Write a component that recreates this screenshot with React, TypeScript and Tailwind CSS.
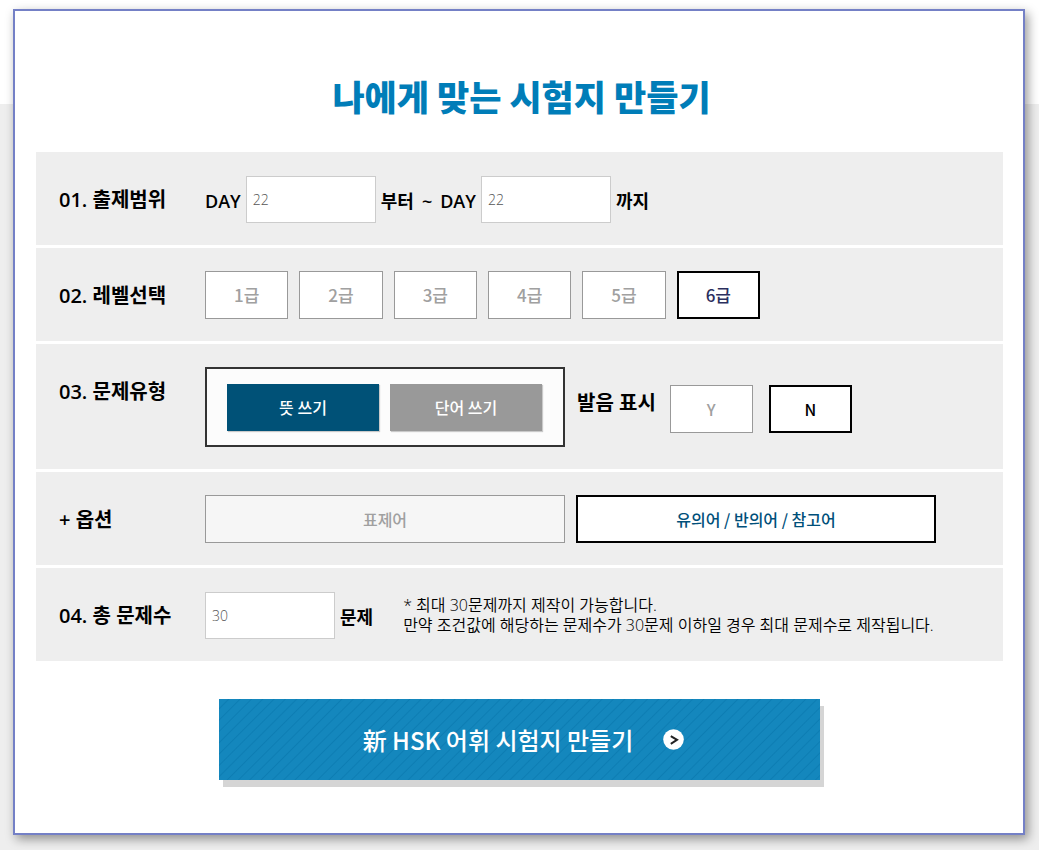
import { useState, type ReactNode } from "react";

const LEVELS = ["1급", "2급", "3급", "4급", "5급", "6급"];

function Row({ label, htmlFor, children }: { label: string; htmlFor?: string; children: ReactNode }) {
  const labelStyle = "flex h-[93px] w-[146px] shrink-0 items-center pt-[3px] text-[20px] leading-6 font-semibold";
  return (
    <div className="flex bg-[#eee] pl-[23px]">
      {htmlFor ? (
        <label htmlFor={htmlFor} className={labelStyle}>{label}</label>
      ) : (
        <h2 className={labelStyle}>{label}</h2>
      )}
      <div className="flex min-w-0 flex-1 items-center pt-[23px] pb-[22px]">{children}</div>
    </div>
  );
}

function NumberBox({ id, value, onChange }: { id: string; value: string; onChange: (v: string) => void }) {
  return (
    <input
      id={id}
      inputMode="numeric"
      value={value}
      onChange={(e) => onChange(e.target.value)}
      className="h-[47px] w-[130px] border border-[#ccc] bg-white px-[6px] text-[14px] font-light text-[#555] outline-none"
    />
  );
}

function Choice({
  active,
  onClick,
  className,
  activeText = "text-black",
  idleBg = "bg-white",
  children,
}: {
  active: boolean;
  onClick: () => void;
  className: string;
  activeText?: string;
  idleBg?: string;
  children: ReactNode;
}) {
  return (
    <button
      type="button"
      aria-pressed={active}
      onClick={onClick}
      className={`h-12 cursor-pointer leading-6 font-medium ${className} ${
        active ? `border-2 border-black bg-white ${activeText}` : `border border-[#999] text-[#a0a0a0] ${idleBg}`
      }`}
    >
      {children}
    </button>
  );
}

export default function App() {
  const [from, setFrom] = useState("22");
  const [to, setTo] = useState("22");
  const [count, setCount] = useState("30");
  const [level, setLevel] = useState("6급");
  const [kind, setKind] = useState("뜻 쓰기");
  const [sound, setSound] = useState("N");
  const [option, setOption] = useState("유의어 / 반의어 / 참고어");

  return (
    <main className="min-h-screen bg-[linear-gradient(#fff_104px,#eee_104px)] pt-[9px] pr-[14px] pb-[15px] pl-[13px] font-['Open_Sans','Noto_Sans_CJK_KR',sans-serif] text-black">
      <form
        onSubmit={(e) => e.preventDefault()}
        className="mx-auto max-w-[1012px] border-2 border-[#7480c6] bg-white pt-[63px] pr-5 pb-[53px] pl-[21px] shadow-[3px_4px_10px_rgba(0,0,0,0.4)]"
      >
        <h1 className="pl-1 text-center font-['Noto_Sans_CJK_KR',sans-serif] text-[35px] leading-[44px] font-black text-[#007db8]">
          나에게 맞는 시험지 만들기
        </h1>

        <div className="mt-[34px] flex flex-col gap-[3px]">
          <Row label="01. 출제범위">
            <div className="flex items-center gap-[5px] text-[18px] leading-6 font-semibold">
              <label htmlFor="day-from" className="pt-[3px]">DAY</label>
              <NumberBox id="day-from" value={from} onChange={setFrom} />
              <div className="flex gap-2 pt-[3px]">
                <span>부터</span>
                <span>~</span>
                <label htmlFor="day-to">DAY</label>
              </div>
              <NumberBox id="day-to" value={to} onChange={setTo} />
              <span className="pt-[3px]">까지</span>
            </div>
          </Row>

          <Row label="02. 레벨선택">
            <div className="grid w-[555px] grid-cols-6 gap-[11px]">
              {LEVELS.map((name) => (
                <Choice
                  key={name}
                  active={level === name}
                  onClick={() => setLevel(name)}
                  activeText="text-[#2b2f5e]"
                  className="font-['Noto_Sans_CJK_KR',sans-serif] text-[17px]"
                >
                  {name}
                </Choice>
              ))}
            </div>
          </Row>

          <Row label="03. 문제유형">
            <div className="flex h-20 w-[360px] items-center gap-[11px] border-2 border-[#333] bg-[#fcfcfc] pl-5">
              {["뜻 쓰기", "단어 쓰기"].map((name) => (
                <button
                  key={name}
                  type="button"
                  aria-pressed={kind === name}
                  onClick={() => setKind(name)}
                  className={`h-[47px] w-[152px] cursor-pointer font-['Noto_Sans_CJK_KR',sans-serif] text-[16px] leading-6 font-medium text-white shadow-[1px_1px_1px_rgba(0,0,0,0.2)] ${
                    kind === name ? "bg-[#005177]" : "bg-[#999]"
                  }`}
                >
                  {name}
                </button>
              ))}
            </div>
            <h3 className="ml-3 pb-2 text-[20px] leading-6 font-semibold">발음 표시</h3>
            <div className="ml-[14px] flex gap-4 pt-[3px]">
              {["Y", "N"].map((name) => (
                <Choice
                  key={name}
                  active={sound === name}
                  onClick={() => setSound(name)}
                  className="w-[83px] font-['Noto_Sans_CJK_KR',sans-serif] text-[16px]"
                >
                  {name}
                </Choice>
              ))}
            </div>
          </Row>

          <Row label="+ 옵션">
            <div className="grid w-[731px] grid-cols-2 gap-[11px]">
              {["표제어", "유의어 / 반의어 / 참고어"].map((name) => (
                <Choice
                  key={name}
                  active={option === name}
                  onClick={() => setOption(name)}
                  activeText="text-[#00507a]"
                  idleBg="bg-[#f6f6f6]"
                  className="font-['Noto_Sans_CJK_KR',sans-serif] text-[16px]"
                >
                  {name}
                </Choice>
              ))}
            </div>
          </Row>

          <Row label="04. 총 문제수" htmlFor="count">
            <div className="flex items-center gap-[5px] text-[18px] leading-6 font-semibold">
              <NumberBox id="count" value={count} onChange={setCount} />
              <span className="pt-[3px]">문제</span>
            </div>
            <p className="ml-[30px] text-[16px] leading-5 font-[350]">
              * 최대 30문제까지 제작이 가능합니다.
              <br />
              만약 조건값에 해당하는 문제수가 30문제 이하일 경우 최대 문제수로 제작됩니다.
            </p>
          </Row>
        </div>

        <button
          type="submit"
          className="mx-auto mt-[38px] flex h-[81px] w-[601px] cursor-pointer items-center justify-center gap-[30px] bg-[repeating-linear-gradient(135deg,#1487bd_0px,#1487bd_6px,#0d7db3_7px,#1487bd_8px)] pl-2 font-['Noto_Sans_CJK_KR',sans-serif] text-[24px] leading-8 font-medium text-white shadow-[4px_7px_0_#d5d5d5]"
        >
          新 HSK 어휘 시험지 만들기
          <svg className="size-[21px]" viewBox="0 0 21 21" fill="none" aria-hidden="true">
            <circle cx="10.5" cy="10.5" r="10.3" fill="#fff" />
            <path d="M7.8 7.2 14 10.8 7.8 14.8" stroke="#222" strokeWidth="2" />
          </svg>
        </button>
      </form>
    </main>
  );
}
